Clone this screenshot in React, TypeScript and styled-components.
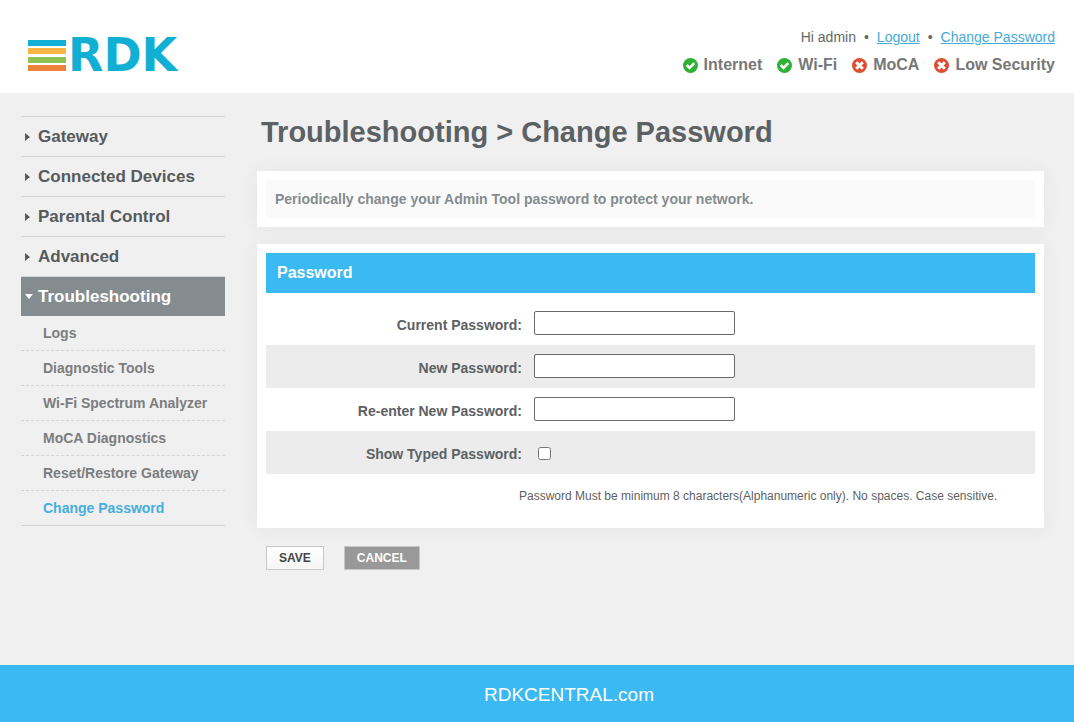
import React, { useState } from "react";
import styled, { createGlobalStyle, css } from "styled-components";

const GlobalStyle = createGlobalStyle`
  *, *::before, *::after { box-sizing: border-box; }
  body {
    margin: 0;
    background: #f0f0f0;
    color: #5c6163;
    font: 14px/20px "Liberation Sans", Arial, sans-serif;
  }
`;

const Page = styled.div`
  display: flex;
  flex-direction: column;
  min-height: 100vh;
`;

const Header = styled.header`
  display: flex;
  justify-content: space-between;
  align-items: flex-start;
  padding: 27px 19px 18px 28px;
  background: #fff;
`;

const HomeLink = styled.a`
  display: flex;
  align-items: center;
  gap: 2px;
  padding-top: 8px;
  color: #11afd4;
  text-decoration: none;
`;

const Wordmark = styled.span`
  font: bold 46px/40px "DejaVu Sans", Verdana, sans-serif;
`;

const HeaderInfo = styled.div`
  display: flex;
  flex-direction: column;
  align-items: flex-end;
  gap: 8px;
`;

const UserBar = styled.div`
  display: flex;
  gap: 8px;
  color: #666;
`;

const UserLink = styled.a`
  color: #45a9d6;
`;

const StatusList = styled.ul`
  display: flex;
  gap: 15px;
  margin: 0;
  padding: 0;
  list-style: none;
`;

const StatusItem = styled.li`
  display: flex;
  align-items: center;
  gap: 6px;
  color: #777;
  font-size: 16px;
  font-weight: bold;
`;

const Body = styled.div`
  display: flex;
  flex: 1;
  align-items: flex-start;
  gap: 32px;
  padding: 23px 30px 40px 21px;
`;

const Sidebar = styled.nav`
  flex: 0 0 204px;
  border-bottom: 1px solid #d4d4d4;
`;

const NavLink = styled.a<{ $open?: boolean }>`
  display: flex;
  align-items: center;
  gap: 7px;
  height: 40px;
  padding-left: 4px;
  border-top: 1px solid #d4d4d4;
  color: #565b5d;
  font-size: 17px;
  font-weight: bold;
  text-decoration: none;
  ${(p) =>
    p.$open &&
    css`
      gap: 5px;
      background: #848c90;
      color: #fff;
    `}
`;

const Arrow = styled.svg`
  flex: none;
`;

const SubList = styled.ul`
  margin: 0;
  padding: 0;
  list-style: none;
`;

const SubItem = styled.li`
  & + & {
    border-top: 1px dashed #d4d4d4;
  }
`;

const SubLink = styled.a<{ $active?: boolean }>`
  display: block;
  padding: 7px 0 7px 22px;
  color: ${(p) => (p.$active ? "#46aedd" : "#7b7d7e")};
  font-weight: bold;
  text-decoration: none;
`;

const Main = styled.main`
  flex: 1;
  min-width: 0;
`;

const Title = styled.h1`
  margin: 0 0 23px;
  padding-left: 4px;
  color: #5c6163;
  font-size: 29px;
  line-height: 32px;
`;

const Panel = styled.section`
  margin-bottom: 17px;
  padding: 9px;
  background: #fff;
  box-shadow: 0 0 20px rgba(0, 0, 0, 0.05);
`;

const Tip = styled.p`
  margin: 0;
  padding: 9px;
  background: #fafafa;
  color: #848c90;
  font-weight: bold;
`;

const PanelTitle = styled.h2`
  margin: 0 0 9px;
  padding: 10px 11px;
  background: #3ab9f2;
  color: #fff;
  font-size: 16px;
  line-height: 20px;
`;

const FieldRow = styled.div<{ $shaded?: boolean }>`
  display: flex;
  align-items: flex-start;
  gap: 12px;
  height: 43px;
  padding-top: 9px;
  background: ${(p) => (p.$shaded ? "#ececec" : "transparent")};
`;

const FieldLabel = styled.label`
  flex: 0 0 256px;
  padding-top: 4px;
  font-weight: bold;
  text-align: right;
`;

const PasswordInput = styled.input`
  width: 201px;
  height: 24px;
  border: 1px solid #6b6b6b;
  border-radius: 2px;
  background: #fff;
`;

const CheckInput = styled.input`
  width: 13px;
  height: 13px;
  margin: 7px 4px;
`;

const Hint = styled.p`
  margin: 0;
  padding: 12px 0 13px 253px;
  color: #5f5f5f;
  font-size: 12px;
`;

const Actions = styled.div`
  display: flex;
  gap: 20px;
  padding: 1px 0 0 9px;
`;

const ActionButton = styled.button<{ $muted?: boolean }>`
  height: 24px;
  padding: 0 12px 1px;
  border: 1px solid #c8c8c8;
  background: ${(p) => (p.$muted ? "#999" : "linear-gradient(#fff, #f5f5f5)")};
  color: ${(p) => (p.$muted ? "#fff" : "#444")};
  font: bold 12px/20px "Liberation Sans", Arial, sans-serif;
`;

const Footer = styled.footer`
  padding: 18px 0 15px 64px;
  background: #3ab9f2;
  text-align: center;
`;

const FooterLink = styled.a`
  color: #fff;
  font-size: 19px;
  line-height: 24px;
  text-decoration: none;
`;

function LogoBars() {
  return (
    <svg width="38" height="31" viewBox="0 0 38 31" aria-hidden="true">
      <rect y="0" width="38" height="6" fill="#11afd4" />
      <rect y="8" width="38" height="6" fill="#fbb545" />
      <rect y="17" width="38" height="6" fill="#8fc153" />
      <rect y="25" width="38" height="6" fill="#ec8338" />
    </svg>
  );
}

function StatusIcon({ ok }: { ok: boolean }) {
  return (
    <svg width="15" height="15" viewBox="0 0 16 16" aria-hidden="true">
      <circle cx="8" cy="8" r="8" fill={ok ? "#2fb135" : "#dd4f35"} />
      {ok ? (
        <path d="M4 7.5 7 10.5 12 5.5" fill="none" stroke="#fff" strokeWidth="2.8" />
      ) : (
        <path d="M4.5 4.5 11.5 11.5M11.5 4.5 4.5 11.5" fill="none" stroke="#fff" strokeWidth="3.2" />
      )}
    </svg>
  );
}

const statuses = [
  { name: "Internet", ok: true },
  { name: "Wi-Fi", ok: true },
  { name: "MoCA", ok: false },
  { name: "Low Security", ok: false },
];

const sections = ["Gateway", "Connected Devices", "Parental Control", "Advanced"];

const tools = [
  "Logs",
  "Diagnostic Tools",
  "Wi-Fi Spectrum Analyzer",
  "MoCA Diagnostics",
  "Reset/Restore Gateway",
  "Change Password",
];

const fields = [
  { id: "current", label: "Current Password:" },
  { id: "new", label: "New Password:" },
  { id: "repeat", label: "Re-enter New Password:" },
];

export default function App() {
  const [show, setShow] = useState(false);
  return (
    <Page>
      <GlobalStyle />
      <Header>
        <HomeLink href="#">
          <LogoBars />
          <Wordmark>RDK</Wordmark>
        </HomeLink>
        <HeaderInfo>
          <UserBar>
            <span>Hi admin</span>
            <span>•</span>
            <UserLink href="#">Logout</UserLink>
            <span>•</span>
            <UserLink href="#">Change Password</UserLink>
          </UserBar>
          <StatusList>
            {statuses.map((s) => (
              <StatusItem key={s.name}>
                <StatusIcon ok={s.ok} />
                {s.name}
              </StatusItem>
            ))}
          </StatusList>
        </HeaderInfo>
      </Header>
      <Body>
        <Sidebar>
          {sections.map((name) => (
            <NavLink key={name} href="#">
              <Arrow width="6" height="10" viewBox="0 0 6 10" aria-hidden="true">
                <path d="M0 1v8l5-4z" fill="#565b5d" />
              </Arrow>
              {name}
            </NavLink>
          ))}
          <NavLink href="#" $open>
            <Arrow width="8" height="5" viewBox="0 0 8 5" aria-hidden="true">
              <path d="M0 0h8L4 5z" fill="#fff" />
            </Arrow>
            Troubleshooting
          </NavLink>
          <SubList>
            {tools.map((name) => (
              <SubItem key={name}>
                <SubLink href="#" $active={name === "Change Password"}>
                  {name}
                </SubLink>
              </SubItem>
            ))}
          </SubList>
        </Sidebar>
        <Main>
          <Title>Troubleshooting &gt; Change Password</Title>
          <Panel>
            <Tip>Periodically change your Admin Tool password to protect your network.</Tip>
          </Panel>
          <form onSubmit={(e) => e.preventDefault()}>
            <Panel>
              <PanelTitle>Password</PanelTitle>
              {fields.map((f, i) => (
                <FieldRow key={f.id} $shaded={i % 2 === 1}>
                  <FieldLabel htmlFor={f.id}>{f.label}</FieldLabel>
                  <PasswordInput id={f.id} type={show ? "text" : "password"} />
                </FieldRow>
              ))}
              <FieldRow $shaded>
                <FieldLabel htmlFor="show">Show Typed Password:</FieldLabel>
                <CheckInput
                  id="show"
                  type="checkbox"
                  checked={show}
                  onChange={(e) => setShow(e.target.checked)}
                />
              </FieldRow>
              <Hint>Password Must be minimum 8 characters(Alphanumeric only). No spaces. Case sensitive.</Hint>
            </Panel>
            <Actions>
              <ActionButton type="submit">SAVE</ActionButton>
              <ActionButton type="reset" $muted>
                CANCEL
              </ActionButton>
            </Actions>
          </form>
        </Main>
      </Body>
      <Footer>
        <FooterLink href="#">RDKCENTRAL.com</FooterLink>
      </Footer>
    </Page>
  );
}
